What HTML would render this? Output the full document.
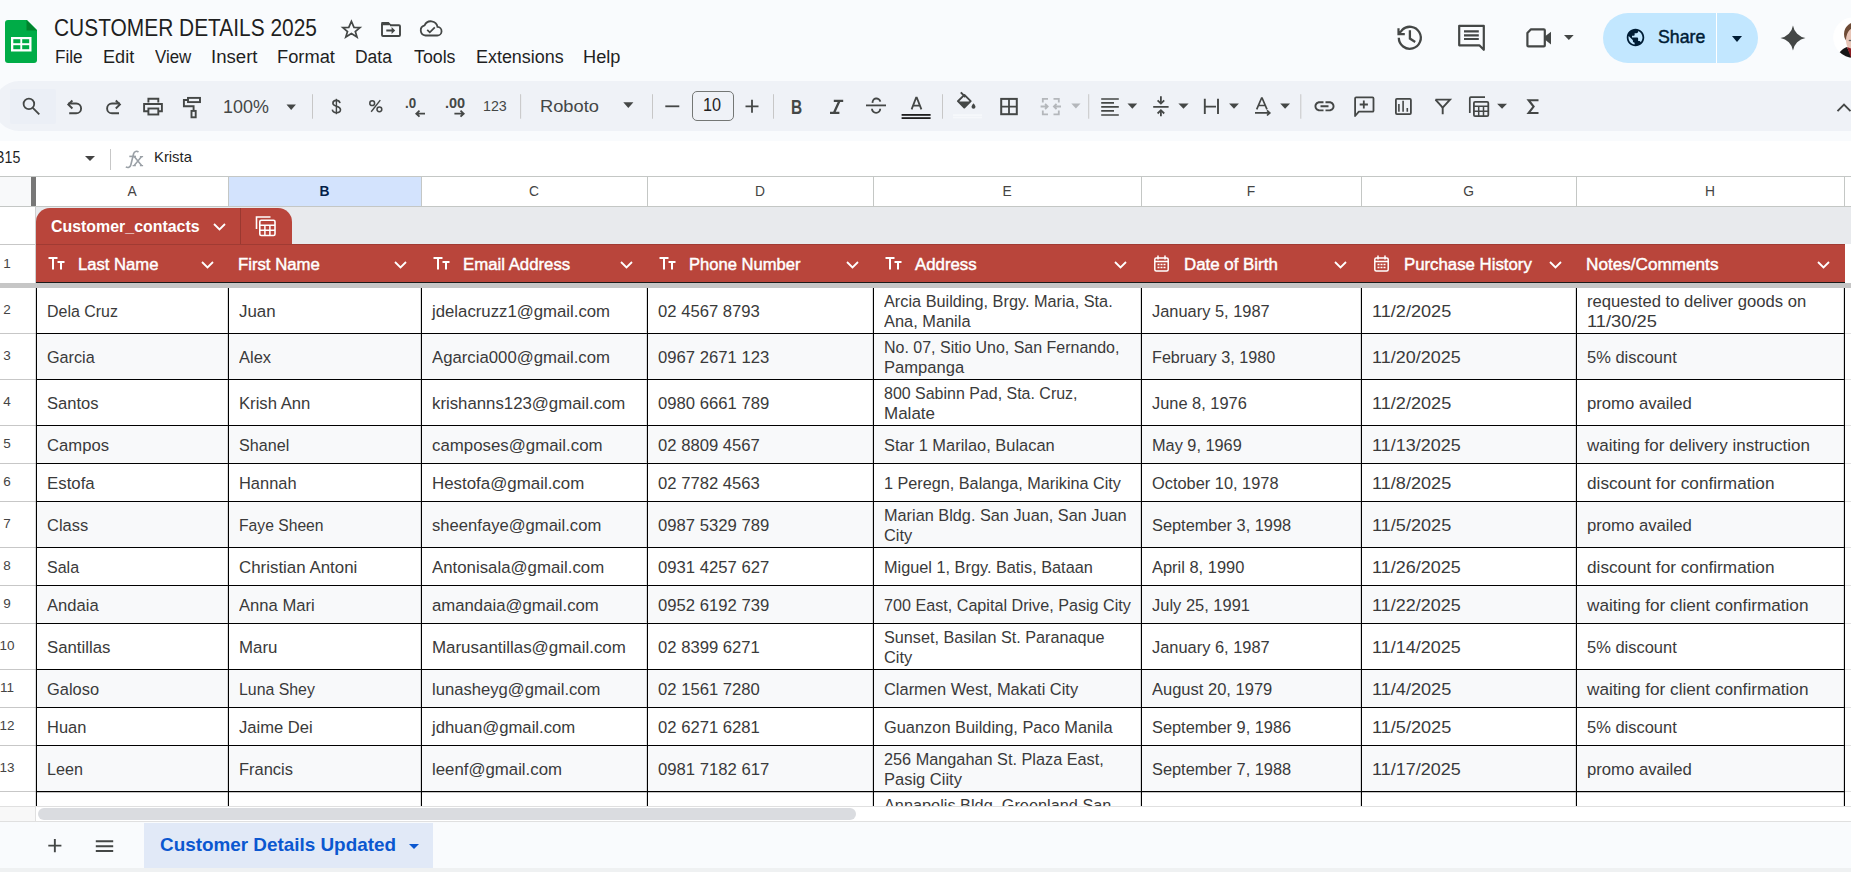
<!DOCTYPE html>
<html><head><meta charset="utf-8"><style>
*{box-sizing:border-box;margin:0;padding:0}
html,body{width:1851px;height:872px;overflow:hidden;background:#f9fbfd;font-family:"Liberation Sans",sans-serif;color:#1f1f1f}
.a{position:absolute}
.t{position:absolute;white-space:pre;line-height:1}
svg{position:absolute;overflow:visible}
.cell{position:absolute;font-size:16px;color:#3a3a3a;white-space:pre;line-height:20px}
.rh{position:absolute;left:-10px;width:34px;font-size:13.5px;color:#444;text-align:center;line-height:1}
.tri{position:absolute;width:0;height:0;border-left:5px solid transparent;border-right:5px solid transparent;border-top:5px solid #444}
.sep{position:absolute;width:1px;background:#c7c7c7}
</style></head><body>

<svg style="left:5px;top:20px" width="32" height="43" viewBox="0 0 32 43">
<path d="M3 0H22L32 10V40a3 3 0 0 1-3 3H3a3 3 0 0 1-3-3V3a3 3 0 0 1 3-3z" fill="#00ac47" />
<path d="M21.5 0L32 10.5H21.5z" fill="#00832d"/>
<rect x="6" y="17" width="20.5" height="14.5" fill="#fff"/>
<rect x="8.3" y="19.2" width="7" height="4" fill="#00ac47"/>
<rect x="17.2" y="19.2" width="7" height="4" fill="#00ac47"/>
<rect x="8.3" y="25.2" width="7" height="4" fill="#00ac47"/>
<rect x="17.2" y="25.2" width="7" height="4" fill="#00ac47"/>
</svg>
<div class="t" style="left:54.11px;top:17.01px;font-size:23.5px;transform:scaleX(0.8896);transform-origin:0 0;color:#1f1f1f">CUSTOMER DETAILS 2025</div>
<div class="t" style="left:54.85px;top:47.86px;font-size:18px;transform:scaleX(0.9538);transform-origin:0 0;color:#1f1f1f">File</div>
<div class="t" style="left:102.59px;top:47.86px;font-size:18px;transform:scaleX(1.0061);transform-origin:0 0;color:#1f1f1f">Edit</div>
<div class="t" style="left:154.50px;top:47.86px;font-size:18px;transform:scaleX(0.9373);transform-origin:0 0;color:#1f1f1f">View</div>
<div class="t" style="left:211.47px;top:47.86px;font-size:18px;transform:scaleX(1.0337);transform-origin:0 0;color:#1f1f1f">Insert</div>
<div class="t" style="left:277.38px;top:47.86px;font-size:18px;transform:scaleX(1.0160);transform-origin:0 0;color:#1f1f1f">Format</div>
<div class="t" style="left:355.43px;top:47.86px;font-size:18px;transform:scaleX(0.9708);transform-origin:0 0;color:#1f1f1f">Data</div>
<div class="t" style="left:414.30px;top:47.86px;font-size:18px;transform:scaleX(0.9876);transform-origin:0 0;color:#1f1f1f">Tools</div>
<div class="t" style="left:475.50px;top:47.86px;font-size:18px;transform:scaleX(0.9960);transform-origin:0 0;color:#1f1f1f">Extensions</div>
<div class="t" style="left:582.59px;top:47.86px;font-size:18px;transform:scaleX(1.0109);transform-origin:0 0;color:#1f1f1f">Help</div>
<div class="a" style="left:1603px;top:13px;width:155px;height:50px;border-radius:25px;background:#c2e7ff"></div>
<div class="a" style="left:1716px;top:13px;width:1px;height:50px;background:#fff"></div>
<svg style="left:1625px;top:27px" width="21" height="21" viewBox="0 0 24 24"><path fill="#001d35" d="M12 2C6.48 2 2 6.48 2 12s4.48 10 10 10 10-4.48 10-10S17.52 2 12 2zm-1 17.93c-3.95-.49-7-3.85-7-7.93 0-.62.08-1.21.21-1.79L9 15v1c0 1.1.9 2 2 2v1.93zm6.9-2.54c-.26-.81-1-1.39-1.9-1.39h-1v-3c0-.55-.45-1-1-1H8v-2h2c.55 0 1-.45 1-1V7h2c1.1 0 2-.9 2-2v-.41c2.93 1.19 5 4.06 5 7.41 0 2.08-.8 3.97-2.1 5.39z"/></svg>
<div class="t" style="left:1657.60px;top:29.22px;font-size:17.7px;transform:scaleX(1.0008);transform-origin:0 0;color:#001d35;-webkit-text-stroke:0.45px #001d35">Share</div>
<div class="tri" style="left:1732px;top:35.5px;border-left-width:5px;border-right-width:5px;border-top:6px solid #001d35"></div>
<svg style="left:1780px;top:25px" width="26" height="26" viewBox="0 0 26 26"><path fill="#444746" transform="translate(0.5,0.5) scale(1.04)" d="M12 24A14.3 14.3 0 0 0 0 12A14.3 14.3 0 0 0 12 0A14.3 14.3 0 0 0 24 12A14.3 14.3 0 0 0 12 24Z"/></svg>
<svg style="left:1833px;top:17px" width="41" height="41" viewBox="0 0 41 41"><defs><clipPath id="av"><circle cx="20.5" cy="20.5" r="20.3"/></clipPath></defs><circle cx="20.5" cy="20.5" r="20.3" fill="#fff"/><g clip-path="url(#av)"><ellipse cx="26" cy="17" rx="15" ry="13" fill="#6e4b36"/><ellipse cx="26.5" cy="23" rx="13.5" ry="15" fill="#e8c5b7"/><path d="M12 13c3-4 9-6 16-5l-4 3c-4 0-8 1-11 4z" fill="#6e4b36"/><ellipse cx="17" cy="23.5" rx="1.4" ry="0.8" fill="#5a5a5a"/><path d="M3 41C5 36 9 32 14 30L19 41Z" fill="#151515"/><path d="M14 30L22 33L26 41H18Z" fill="#8c1c22"/></g></svg>
<div class="a" style="left:-6px;top:81px;width:1900px;height:50px;border-radius:25px;background:#eff2f7"></div>
<div class="a" style="left:10px;top:89px;width:46px;height:35px;border-radius:2px;background:#ebeff6"></div>
<svg style="left:0;top:0" width="1851" height="140" viewBox="0 0 1851 140">
<g fill="none" stroke="#444746" stroke-width="1.9">
<!-- title star -->
<path d="M351.4 21.3L354 27.4L360 27.6L355.3 31.6L357 37L351.4 33.6L345.8 37L347.5 31.6L342.8 27.6L348.8 27.4Z" stroke-width="1.7" stroke-linejoin="miter"/>
<!-- folder -->
<path d="M382 24V35a1 1 0 0 0 1 1H399a1 1 0 0 0 1-1V26.2a1 1 0 0 0-1-1H390" stroke-width="1.9"/>
<!-- cloud -->
<path d="M425.5 35.5h11.5a4.3 4.3 0 0 0 0.5-8.6a6.8 6.8 0 0 0-12.9-1.6a5.2 5.2 0 0 0 0.9 10.2z" stroke-width="1.8"/>
<path d="M427.2 29.8l2.6 2.6l5-5" stroke-width="1.7"/>
<!-- search -->
<circle cx="28.9" cy="103.9" r="5.3" stroke-width="1.8"/>
<path d="M32.8 107.8L39.3 114.3" stroke-width="1.9"/>
<!-- undo -->
<path d="M69.2 113.3H76.2a4.9 4.9 0 0 0 0-9.8H68.3" />
<path d="M72.4 100.5L68.3 104.5L72.4 108.5"/>
<!-- redo -->
<path d="M119 113.3H112a4.9 4.9 0 0 1 0-9.8H119.9" />
<path d="M115.8 100.5L119.9 104.5L115.8 108.5"/>
<!-- print -->
<path d="M148.4 102.6V98.8H158.3V102.6"/>
<path d="M148 111.2H144.1V104H161.9V111.2H158.7"/>
<rect x="148.4" y="108.5" width="9.9" height="6"/>
<!-- paint format -->
<rect x="188" y="97.9" width="12" height="4.2"/>
<path d="M188 100H183.9V106.3H193.6V110.8"/>
<rect x="191.5" y="110.9" width="4.2" height="6.4"/>
<!-- separators -->
</g>
<g fill="#444746">
<path d="M381.1 23.1a1 1 0 0 1 1-1h6.6l3 3.1H381.1z"/>
<path d="M386.3 29.5h5.3v-2.6l3.6 3.6l-3.6 3.6v-2.6h-5.3z"/>
<path d="M286.5 104.4h9.4l-4.7 5.7z"/>
<path d="M623.3 102.3h10.1l-5.05 5.8z"/>
</g>
<g fill="#c7c7c7">
<rect x="312" y="94.2" width="1" height="24.5"/>
<rect x="520.1" y="94.2" width="1" height="24.5"/>
<rect x="652" y="94.2" width="1" height="24.5"/>
<rect x="773" y="94.2" width="1" height="24.5"/>
<rect x="942" y="94.2" width="1" height="24.5"/>
<rect x="1088.2" y="94.2" width="1" height="24.5"/>
<rect x="1300.3" y="94.2" width="1" height="24.5"/>
</g>
<!-- text items -->
<g font-family="Liberation Sans" fill="#444746">
</g>
<g fill="none" stroke="#444746" stroke-width="1.8">
<path d="M425 113.7H416.5M419.5 110.7L416.3 113.7L419.5 116.7"/>
<path d="M454.4 113.7H463.5M460.5 110.7L463.7 113.7L460.5 116.7"/>
<!-- minus / plus -->
<path d="M665.3 106.3H679.3"/>
<path d="M752 99.8V112.8M745.5 106.3H758.5"/>
</g>
<g fill="none" stroke="#444746" stroke-width="1.6">
<path d="M340 103.2C339.6 101.3 338.2 100.4 336.4 100.4C334.3 100.4 332.9 101.6 332.9 103.2C332.9 105 334.8 105.7 336.6 106.2C338.7 106.8 340.5 107.5 340.5 109.7C340.5 111.5 338.8 112.6 336.5 112.6C334.3 112.6 332.6 111.5 332.3 109.6"/>
<path d="M336.4 98.8V114.2" stroke-width="1.4"/>
<circle cx="372.2" cy="103.2" r="2.4" stroke-width="1.5"/>
<circle cx="379.4" cy="109.3" r="2.4" stroke-width="1.5"/>
<path d="M380.3 100.1L371.2 111.8" stroke-width="1.4"/>
</g>
<!-- font size box -->
<rect x="692.5" y="91.5" width="41" height="29" rx="4.5" fill="none" stroke="#747775" stroke-width="1"/>
<!-- Bold -->
<!-- Italic -->
<path d="M833.8 100.9H843.2M830 112.8H839.4M839.4 100.9L834 112.8" fill="none" stroke="#444746" stroke-width="2.3"/>
<!-- Strikethrough -->
<path d="M866 105.4H886" stroke="#444746" stroke-width="1.8"/>
<path d="M872.6 102.8A3.9 3.9 0 0 1 880.3 101.6M872 108.8A3.9 3.9 0 0 0 880.2 108.8" fill="none" stroke="#444746" stroke-width="1.9"/>
<!-- A text color -->
<path d="M911.6 109.4L916.1 97.6h0.7L921.4 109.4M913.2 105.6h6.6" fill="none" stroke="#444746" stroke-width="1.8"/>
<rect x="901.6" y="114" width="29" height="1.8" fill="#1f1f1f"/>
<rect x="901.6" y="117.2" width="29" height="1.8" fill="#1f1f1f"/>
<!-- fill color -->
<path d="M960.8 92.4L965.4 97" stroke="#444746" stroke-width="1.9"/>
<path d="M964.4 94.9L970.7 101.2L964.3 107.6L957.9 101.2Z" fill="none" stroke="#444746" stroke-width="1.9" stroke-linejoin="round"/>
<path d="M958.6 101.4H970L964.3 107Z" fill="#444746"/>
<path d="M973.5 103.2c0 0 -2 2.4 -2 3.6a2 2 0 0 0 4 0c0-1.2-2-3.6-2-3.6z" fill="#444746"/>
<rect x="953" y="114.2" width="29" height="1.8" fill="#f6f8fb"/>
<rect x="953" y="116.6" width="29" height="1.8" fill="#f6f8fb"/>
<!-- borders -->
<rect x="1001.2" y="98.9" width="15.6" height="15.3" fill="none" stroke="#444746" stroke-width="2"/>
<path d="M1009 98.9V114.2M1001.2 106.55H1016.8" stroke="#444746" stroke-width="1.8"/>
<!-- merge (disabled) -->
<g fill="none" stroke="#b4b7bb" stroke-width="1.8">
<path d="M1048 98.9H1042.8V102.6M1048 114.3H1042.8V110.6M1053.5 98.9H1058.8V102.6M1053.5 114.3H1058.8V110.6"/>
<path d="M1040.6 106.5H1047.6M1045.1 103.9L1047.7 106.5L1045.1 109.1M1061 106.5H1054M1056.5 103.9L1053.9 106.5L1056.5 109.1"/>
</g>
<path d="M1071.3 103.6h9.2l-4.6 4.8z" fill="#b4b7bb"/>
<!-- align left -->
<path d="M1101.2 99H1118.8M1101.2 102.9H1114M1101.2 106.9H1118.8M1101.2 110.9H1114M1101.2 115H1118.8" stroke="#444746" stroke-width="1.7"/>
<path d="M1127.5 103.6h9.7l-4.85 5.2z" fill="#444746"/>
<!-- valign -->
<path d="M1153.2 106.9H1168.6M1160.9 96.3V103M1160.9 116.3V110.8" stroke="#444746" stroke-width="1.8" fill="none"/>
<path d="M1157.6 100.3L1160.9 103.6L1164.2 100.3M1157.6 113.5L1160.9 110.2L1164.2 113.5" stroke="#444746" stroke-width="1.8" fill="none"/>
<path d="M1178.4 103.6h10.2l-5.1 5.2z" fill="#444746"/>
<!-- wrap -->
<path d="M1204.8 98.8V114M1218 98.8V114M1204.8 106.6H1216" stroke="#444746" stroke-width="1.9" fill="none"/>
<path d="M1229.1 103.6h9.8l-4.9 5.2z" fill="#444746"/>
<!-- rotate -->
<path d="M1256.7 109.3L1261.6 98h0.5L1267 109.3M1258.5 105.5h6.8" stroke="#444746" stroke-width="1.7" fill="none"/>
<path d="M1255 112.9H1269.5M1267 110.3L1269.8 112.9L1267 115.5" stroke="#444746" stroke-width="1.7" fill="none"/>
<path d="M1280.2 103.6h9.8l-4.9 5.2z" fill="#444746"/>
<!-- link -->
<path transform="translate(1312.5,94.3)" fill="#444746" d="M3.9 12c0-1.71 1.39-3.1 3.1-3.1h4V7H7c-2.76 0-5 2.240-5 5s2.24 5 5 5h4v-1.9H7c-1.71 0-3.1-1.39-3.1-3.1zM8 13h8v-2H8v2zm9-6h-4v1.9h4c1.71 0 3.1 1.39 3.1 3.1s-1.39 3.1-3.1 3.1h-4V17h4c2.76 0 5-2.24 5-5s-2.240-5-5-5z"/>
<!-- comment+ -->
<path d="M1355.1 116V98.4a1 1 0 0 1 1-1H1372.5a1 1 0 0 1 1 1V110.7a1 1 0 0 1-1 1H1358.8z" stroke="#444746" stroke-width="1.8" fill="none" stroke-linejoin="round"/>
<path d="M1363.8 100.4V108.6M1359.7 104.5H1367.9" stroke="#444746" stroke-width="1.8"/>
<!-- chart -->
<rect x="1395.9" y="98.9" width="15" height="15.2" rx="1" fill="none" stroke="#444746" stroke-width="1.8"/>
<path d="M1398.9 104V111.8M1403.1 100.7V111.8M1407.3 108V111.8" stroke="#444746" stroke-width="1.6"/>
<!-- filter -->
<path d="M1435.5 99.6H1450L1442.7 107.6V114.3" stroke="#444746" stroke-width="1.9" fill="none" stroke-linejoin="miter"/>
<path d="M1435.5 99.6L1442.7 107.6" stroke="#444746" stroke-width="1.9"/>
<!-- table -->
<path d="M1469.8 113V98.2a1 1 0 0 1 1-1H1485" stroke="#444746" stroke-width="1.7" fill="none"/>
<rect x="1473.9" y="101.8" width="14.4" height="14.4" rx="1.2" fill="none" stroke="#444746" stroke-width="1.8"/>
<path d="M1473.9 106.3H1488.3M1473.9 111.3H1488.3M1478.7 106.3V116.2M1483.5 106.3V116.2" stroke="#444746" stroke-width="1.5"/>
<path d="M1497.1 103.7h9.9l-4.95 5.1z" fill="#444746"/>
<!-- sigma -->
<path d="M1538.5 100.2H1528.6L1533.6 106.6L1528.6 113H1538.5" stroke="#444746" stroke-width="2.1" fill="none" stroke-linejoin="miter"/>
<!-- caret up -->
<path d="M1837.5 111.2L1844 104.6L1850.5 111.2" stroke="#444746" stroke-width="1.9" fill="none"/>
<!-- topbar right -->
<g fill="none" stroke="#444746" stroke-width="2.3">
<path d="M1402 30A11 11 0 1 1 1398.8 37.8"/><path d="M1398.5 28.2V34.1H1404.8M1398.8 33.8L1402.5 29.8" stroke-width="2.2"/>
<path d="M1409.9 30.3V38.6L1415.2 41.9"/>
</g>

<path d="M1459.2 25.8H1483.8V49.8L1479.3 45.3H1459.2Z" fill="none" stroke="#444746" stroke-width="2.2" stroke-linejoin="round"/>
<path d="M1464 31.4H1478.8M1464 35.3H1478.8M1464 39H1478.8" stroke="#444746" stroke-width="2.2"/>
<path d="M1531 29.3H1543.8a1 1 0 0 1 1 1V45.4a1 1 0 0 1-1 1H1528.4a1 1 0 0 1-1-1V33Z" fill="none" stroke="#444746" stroke-width="2.2" stroke-linejoin="round"/>
<path d="M1544.8 36.5L1551 31.7V44.4L1544.8 39.6Z" fill="#444746"/>
<path d="M1564 35h9.7l-4.85 4.9z" fill="#444746"/>

</svg>
<div class="t" style="left:222.51px;top:97.86px;font-size:18px;transform:scaleX(0.9948);transform-origin:0 0;color:#444746">100%</div>
<div class="t" style="left:483.18px;top:97.86px;font-size:15.4px;transform:scaleX(0.9246);transform-origin:0 0;color:#444746">123</div>
<div class="t" style="left:405.10px;top:96.10px;font-size:14.3px;font-weight:bold;transform:scaleX(0.9355);transform-origin:0 0;color:#444746">.0</div>
<div class="t" style="left:791.21px;top:97.69px;font-size:19.5px;font-weight:bold;transform:scaleX(0.7923);transform-origin:0 0;color:#444746">B</div>
<div class="t" style="left:445.00px;top:96.10px;font-size:14.3px;font-weight:bold;transform:scaleX(1.0139);transform-origin:0 0;color:#444746">.00</div>
<div class="t" style="left:539.82px;top:98.11px;font-size:17px;transform:scaleX(1.0756);transform-origin:0 0;color:#444746">Roboto</div>
<div class="t" style="left:702.87px;top:96.99px;font-size:17.5px;transform:scaleX(0.9289);transform-origin:0 0;color:#1f1f1f">10</div>
<div class="a" style="left:0;top:141px;width:1851px;height:35px;background:#fff"></div>
<div class="t" style="left:-4.86px;top:150.15px;font-size:16.6px;transform:scaleX(0.8588);transform-origin:0 0;color:#1f1f1f">B15</div>
<div class="tri" style="left:85px;top:156px"></div>
<div class="sep" style="left:110px;top:149px;height:21px"></div>
<svg style="left:0;top:0" width="200" height="176" viewBox="0 0 200 176"><g fill="none" stroke="#9aa0a6" stroke-width="1.6"><path d="M138.5 152c-1.6-1.2-4.2-1-4.9 1.8l-2.8 11.2c-0.6 2.4-2.6 3-5 2.1"/><path d="M129.3 156.4H135.8"/><path d="M134.2 156.6L141.6 165.6M141.6 156.6L134.2 165.6" stroke-width="1.5"/><path d="M132.6 156.6h3.2M139.9 156.6h3.2M132.6 165.6h3.2M139.9 165.6h3.2" stroke-width="1.3"/></g></svg>
<div class="t" style="left:153.68px;top:150.43px;font-size:14.5px;transform:scaleX(1.0216);transform-origin:0 0;color:#1f1f1f">Krista</div>
<div class="a" style="left:0;top:176px;width:1851px;height:31px;background:#fff;border-top:1px solid #c4c7c5;border-bottom:1px solid #c4c7c5"></div>
<div class="a" style="left:0;top:177px;width:31px;height:29px;background:#f8f9fa"></div>
<div class="a" style="left:31px;top:177px;width:5px;height:29px;background:#777"></div>
<div class="a" style="left:229px;top:177px;width:192px;height:29px;background:#d3e3fd"></div>
<div class="t" style="left:36px;width:192px;text-align:center;top:185px;font-size:13.8px;color:#444;">A</div>
<div class="t" style="left:228px;width:193px;text-align:center;top:185px;font-size:13.8px;font-weight:bold;color:#041e49;">B</div>
<div class="t" style="left:421px;width:226px;text-align:center;top:185px;font-size:13.8px;color:#444;">C</div>
<div class="t" style="left:647px;width:226px;text-align:center;top:185px;font-size:13.8px;color:#444;">D</div>
<div class="t" style="left:873px;width:268px;text-align:center;top:185px;font-size:13.8px;color:#444;">E</div>
<div class="t" style="left:1141px;width:220px;text-align:center;top:185px;font-size:13.8px;color:#444;">F</div>
<div class="t" style="left:1361px;width:215px;text-align:center;top:185px;font-size:13.8px;color:#444;">G</div>
<div class="t" style="left:1576px;width:268px;text-align:center;top:185px;font-size:13.8px;color:#444;">H</div>
<div class="a" style="left:228px;top:177px;width:1px;height:29px;background:#c4c7c5"></div>
<div class="a" style="left:421px;top:177px;width:1px;height:29px;background:#c4c7c5"></div>
<div class="a" style="left:647px;top:177px;width:1px;height:29px;background:#c4c7c5"></div>
<div class="a" style="left:873px;top:177px;width:1px;height:29px;background:#c4c7c5"></div>
<div class="a" style="left:1141px;top:177px;width:1px;height:29px;background:#c4c7c5"></div>
<div class="a" style="left:1361px;top:177px;width:1px;height:29px;background:#c4c7c5"></div>
<div class="a" style="left:1576px;top:177px;width:1px;height:29px;background:#c4c7c5"></div>
<div class="a" style="left:1844px;top:177px;width:1px;height:29px;background:#c4c7c5"></div>
<div class="a" style="left:0;top:207px;width:1851px;height:599px;background:#fff"></div>
<div class="a" style="left:36px;top:207px;width:1815px;height:37px;background:#e8eaed"></div>
<div class="a" style="left:0;top:244px;width:36px;height:1px;background:#c7c7c7"></div>
<div class="a" style="left:36px;top:208px;width:256px;height:37px;background:#b9453b;border-radius:14px 14px 0 0"></div>
<div class="a" style="left:240px;top:208px;width:1px;height:36px;background:#9a3830"></div>
<div class="t" style="left:50.70px;top:219.38px;font-size:16.8px;font-weight:bold;transform:scaleX(0.9486);transform-origin:0 0;color:#fff">Customer_contacts</div>
<svg style="left:213px;top:223px" width="13" height="8" viewBox="0 0 13 8"><path d="M1 1L6.5 6.5L12 1" fill="none" stroke="#fff" stroke-width="1.8"/></svg>
<svg style="left:255px;top:215px" width="22" height="22" viewBox="0 0 22 22"><path d="M1.5 14V2h14" fill="none" stroke="#fff" stroke-width="1.6"/><rect x="4.8" y="5.3" width="15.2" height="15.2" rx="1.5" fill="none" stroke="#fff" stroke-width="1.6"/><path d="M4.8 10.3h15.2M4.8 15.3h15.2M9.9 10.3v10.2M14.9 10.3v10.2" stroke="#fff" stroke-width="1.5"/></svg>
<div class="a" style="left:36px;top:244px;width:1809px;height:39px;background:#b9453b;border-top:1px solid #a03b33;border-bottom:1px solid #1a1a1a"></div>
<div class="rh" style="top:256.6px">1</div>
<svg style="left:48px;top:257px" width="17" height="13" viewBox="0 0 17 13"><path d="M0.5 1h9M5 1v11.5M9.5 5h7M13 5v7.5" stroke="#fff" stroke-width="2" fill="none"/></svg>
<div class="t" style="left:78px;top:256.86px;font-size:16.7px;transform:scaleX(0.9971);transform-origin:0 0;color:#fff;-webkit-text-stroke:0.45px #fff">Last Name</div>
<svg style="left:201px;top:261px" width="13" height="8" viewBox="0 0 13 8"><path d="M1 1L6.5 6.5L12 1" fill="none" stroke="#fff" stroke-width="1.8"/></svg>
<div class="t" style="left:238px;top:256.86px;font-size:16.7px;transform:scaleX(1.0025);transform-origin:0 0;color:#fff;-webkit-text-stroke:0.45px #fff">First Name</div>
<svg style="left:394px;top:261px" width="13" height="8" viewBox="0 0 13 8"><path d="M1 1L6.5 6.5L12 1" fill="none" stroke="#fff" stroke-width="1.8"/></svg>
<svg style="left:433px;top:257px" width="17" height="13" viewBox="0 0 17 13"><path d="M0.5 1h9M5 1v11.5M9.5 5h7M13 5v7.5" stroke="#fff" stroke-width="2" fill="none"/></svg>
<div class="t" style="left:463px;top:256.86px;font-size:16.7px;transform:scaleX(1.0045);transform-origin:0 0;color:#fff;-webkit-text-stroke:0.45px #fff">Email Address</div>
<svg style="left:620px;top:261px" width="13" height="8" viewBox="0 0 13 8"><path d="M1 1L6.5 6.5L12 1" fill="none" stroke="#fff" stroke-width="1.8"/></svg>
<svg style="left:659px;top:257px" width="17" height="13" viewBox="0 0 17 13"><path d="M0.5 1h9M5 1v11.5M9.5 5h7M13 5v7.5" stroke="#fff" stroke-width="2" fill="none"/></svg>
<div class="t" style="left:689px;top:256.86px;font-size:16.7px;transform:scaleX(0.9928);transform-origin:0 0;color:#fff;-webkit-text-stroke:0.45px #fff">Phone Number</div>
<svg style="left:846px;top:261px" width="13" height="8" viewBox="0 0 13 8"><path d="M1 1L6.5 6.5L12 1" fill="none" stroke="#fff" stroke-width="1.8"/></svg>
<svg style="left:885px;top:257px" width="17" height="13" viewBox="0 0 17 13"><path d="M0.5 1h9M5 1v11.5M9.5 5h7M13 5v7.5" stroke="#fff" stroke-width="2" fill="none"/></svg>
<div class="t" style="left:915px;top:256.86px;font-size:16.7px;transform:scaleX(1.0066);transform-origin:0 0;color:#fff;-webkit-text-stroke:0.45px #fff">Address</div>
<svg style="left:1114px;top:261px" width="13" height="8" viewBox="0 0 13 8"><path d="M1 1L6.5 6.5L12 1" fill="none" stroke="#fff" stroke-width="1.8"/></svg>
<svg style="left:1154px;top:255px" width="15" height="17" viewBox="0 0 15 17"><rect x="0.8" y="3" width="13.4" height="13" rx="1.5" fill="none" stroke="#fff" stroke-width="1.5"/><path d="M0.8 6.5h13.4M4 0.5v4M11 0.5v4" stroke="#fff" stroke-width="1.5"/><path d="M3.5 9.5h2M6.5 9.5h2M9.5 9.5h2M3.5 12.5h2M6.5 12.5h2M9.5 12.5h2" stroke="#fff" stroke-width="1.4"/></svg>
<div class="t" style="left:1184px;top:256.86px;font-size:16.7px;transform:scaleX(1.0111);transform-origin:0 0;color:#fff;-webkit-text-stroke:0.45px #fff">Date of Birth</div>
<svg style="left:1334px;top:261px" width="13" height="8" viewBox="0 0 13 8"><path d="M1 1L6.5 6.5L12 1" fill="none" stroke="#fff" stroke-width="1.8"/></svg>
<svg style="left:1374px;top:255px" width="15" height="17" viewBox="0 0 15 17"><rect x="0.8" y="3" width="13.4" height="13" rx="1.5" fill="none" stroke="#fff" stroke-width="1.5"/><path d="M0.8 6.5h13.4M4 0.5v4M11 0.5v4" stroke="#fff" stroke-width="1.5"/><path d="M3.5 9.5h2M6.5 9.5h2M9.5 9.5h2M3.5 12.5h2M6.5 12.5h2M9.5 12.5h2" stroke="#fff" stroke-width="1.4"/></svg>
<div class="t" style="left:1404px;top:256.86px;font-size:16.7px;transform:scaleX(1.0060);transform-origin:0 0;color:#fff;-webkit-text-stroke:0.45px #fff">Purchase History</div>
<svg style="left:1549px;top:261px" width="13" height="8" viewBox="0 0 13 8"><path d="M1 1L6.5 6.5L12 1" fill="none" stroke="#fff" stroke-width="1.8"/></svg>
<div class="t" style="left:1586px;top:256.86px;font-size:16.7px;transform:scaleX(1.0276);transform-origin:0 0;color:#fff;-webkit-text-stroke:0.45px #fff">Notes/Comments</div>
<svg style="left:1817px;top:261px" width="13" height="8" viewBox="0 0 13 8"><path d="M1 1L6.5 6.5L12 1" fill="none" stroke="#fff" stroke-width="1.8"/></svg>
<div class="a" style="left:0;top:283px;width:1851px;height:5px;background:#c6c6c6"></div>
<div class="a" style="left:37px;top:288px;width:1807px;height:45px;background:#fff"></div>
<div class="rh" style="top:302.6px">2</div>
<div class="a" style="left:0;top:333px;width:36px;height:1px;background:#c7c7c7"></div>
<div class="a" style="left:1845px;top:333px;width:6px;height:1px;background:#e1e1e1"></div>
<div class="t" style="left:46.5px;top:303.86px;font-size:16.7px;transform:scaleX(0.9560);transform-origin:0 0;color:#3a3a3a">Dela Cruz</div>
<div class="t" style="left:238.5px;top:303.86px;font-size:16.7px;transform:scaleX(1.0125);transform-origin:0 0;color:#3a3a3a">Juan</div>
<div class="t" style="left:431.5px;top:303.86px;font-size:16.7px;transform:scaleX(1.0037);transform-origin:0 0;color:#3a3a3a">jdelacruzz1@gmail.com</div>
<div class="t" style="left:657.5px;top:303.86px;font-size:16.7px;transform:scaleX(0.9979);transform-origin:0 0;color:#3a3a3a">02 4567 8793</div>
<div class="t" style="left:883.5px;top:293.86px;font-size:16.7px;transform:scaleX(0.9759);transform-origin:0 0;color:#3a3a3a">Arcia Building, Brgy. Maria, Sta.</div>
<div class="t" style="left:883.5px;top:313.86px;font-size:16.7px;transform:scaleX(0.9816);transform-origin:0 0;color:#3a3a3a">Ana, Manila</div>
<div class="t" style="left:1151.5px;top:303.86px;font-size:16.7px;transform:scaleX(0.9836);transform-origin:0 0;color:#3a3a3a">January 5, 1987</div>
<div class="t" style="left:1371.5px;top:303.86px;font-size:16.7px;transform:scaleX(1.0860);transform-origin:0 0;color:#3a3a3a">11/2/2025</div>
<div class="t" style="left:1586.5px;top:293.86px;font-size:16.7px;transform:scaleX(0.9969);transform-origin:0 0;color:#3a3a3a">requested to deliver goods on</div>
<div class="t" style="left:1586.5px;top:313.86px;font-size:16.7px;transform:scaleX(1.0974);transform-origin:0 0;color:#3a3a3a">11/30/25</div>
<div class="a" style="left:36px;top:333px;width:1809px;height:1px;background:#000"></div>
<div class="a" style="left:36px;top:334px;width:1809px;height:1px;background:#555;opacity:.35"></div>
<div class="a" style="left:37px;top:334px;width:1807px;height:45px;background:#f8f9fa"></div>
<div class="rh" style="top:348.6px">3</div>
<div class="a" style="left:0;top:379px;width:36px;height:1px;background:#c7c7c7"></div>
<div class="a" style="left:1845px;top:379px;width:6px;height:1px;background:#e1e1e1"></div>
<div class="t" style="left:46.5px;top:349.86px;font-size:16.7px;transform:scaleX(0.9711);transform-origin:0 0;color:#3a3a3a">Garcia</div>
<div class="t" style="left:238.5px;top:349.86px;font-size:16.7px;transform:scaleX(0.9860);transform-origin:0 0;color:#3a3a3a">Alex</div>
<div class="t" style="left:431.5px;top:349.86px;font-size:16.7px;transform:scaleX(1.0033);transform-origin:0 0;color:#3a3a3a">Agarcia000@gmail.com</div>
<div class="t" style="left:657.5px;top:349.86px;font-size:16.7px;transform:scaleX(0.9987);transform-origin:0 0;color:#3a3a3a">0967 2671 123</div>
<div class="t" style="left:883.5px;top:339.86px;font-size:16.7px;transform:scaleX(0.9577);transform-origin:0 0;color:#3a3a3a">No. 07, Sitio Uno, San Fernando,</div>
<div class="t" style="left:883.5px;top:359.86px;font-size:16.7px;transform:scaleX(0.9925);transform-origin:0 0;color:#3a3a3a">Pampanga</div>
<div class="t" style="left:1151.5px;top:349.86px;font-size:16.7px;transform:scaleX(0.9688);transform-origin:0 0;color:#3a3a3a">February 3, 1980</div>
<div class="t" style="left:1371.5px;top:349.86px;font-size:16.7px;transform:scaleX(1.0773);transform-origin:0 0;color:#3a3a3a">11/20/2025</div>
<div class="t" style="left:1586.5px;top:349.86px;font-size:16.7px;transform:scaleX(0.9875);transform-origin:0 0;color:#3a3a3a">5% discount</div>
<div class="a" style="left:36px;top:379px;width:1809px;height:1px;background:#000"></div>
<div class="a" style="left:36px;top:380px;width:1809px;height:1px;background:#555;opacity:.35"></div>
<div class="a" style="left:37px;top:380px;width:1807px;height:45px;background:#fff"></div>
<div class="rh" style="top:394.6px">4</div>
<div class="a" style="left:0;top:425px;width:36px;height:1px;background:#c7c7c7"></div>
<div class="a" style="left:1845px;top:425px;width:6px;height:1px;background:#e1e1e1"></div>
<div class="t" style="left:46.5px;top:395.86px;font-size:16.7px;transform:scaleX(0.9919);transform-origin:0 0;color:#3a3a3a">Santos</div>
<div class="t" style="left:238.5px;top:395.86px;font-size:16.7px;transform:scaleX(0.9983);transform-origin:0 0;color:#3a3a3a">Krish Ann</div>
<div class="t" style="left:431.5px;top:395.86px;font-size:16.7px;transform:scaleX(1.0057);transform-origin:0 0;color:#3a3a3a">krishanns123@gmail.com</div>
<div class="t" style="left:657.5px;top:395.86px;font-size:16.7px;transform:scaleX(0.9987);transform-origin:0 0;color:#3a3a3a">0980 6661 789</div>
<div class="t" style="left:883.5px;top:385.86px;font-size:16.7px;transform:scaleX(0.9569);transform-origin:0 0;color:#3a3a3a">800 Sabinn Pad, Sta. Cruz,</div>
<div class="t" style="left:883.5px;top:405.86px;font-size:16.7px;transform:scaleX(1.0181);transform-origin:0 0;color:#3a3a3a">Malate</div>
<div class="t" style="left:1151.5px;top:395.86px;font-size:16.7px;transform:scaleX(0.9819);transform-origin:0 0;color:#3a3a3a">June 8, 1976</div>
<div class="t" style="left:1371.5px;top:395.86px;font-size:16.7px;transform:scaleX(1.0860);transform-origin:0 0;color:#3a3a3a">11/2/2025</div>
<div class="t" style="left:1586.5px;top:395.86px;font-size:16.7px;transform:scaleX(1.0001);transform-origin:0 0;color:#3a3a3a">promo availed</div>
<div class="a" style="left:36px;top:425px;width:1809px;height:1px;background:#000"></div>
<div class="a" style="left:36px;top:426px;width:1809px;height:1px;background:#555;opacity:.35"></div>
<div class="a" style="left:37px;top:426px;width:1807px;height:37px;background:#f8f9fa"></div>
<div class="rh" style="top:436.6px">5</div>
<div class="a" style="left:0;top:463px;width:36px;height:1px;background:#c7c7c7"></div>
<div class="a" style="left:1845px;top:463px;width:6px;height:1px;background:#e1e1e1"></div>
<div class="t" style="left:46.5px;top:437.86px;font-size:16.7px;transform:scaleX(0.9972);transform-origin:0 0;color:#3a3a3a">Campos</div>
<div class="t" style="left:238.5px;top:437.86px;font-size:16.7px;transform:scaleX(0.9663);transform-origin:0 0;color:#3a3a3a">Shanel</div>
<div class="t" style="left:431.5px;top:437.86px;font-size:16.7px;transform:scaleX(1.0090);transform-origin:0 0;color:#3a3a3a">camposes@gmail.com</div>
<div class="t" style="left:657.5px;top:437.86px;font-size:16.7px;transform:scaleX(0.9979);transform-origin:0 0;color:#3a3a3a">02 8809 4567</div>
<div class="t" style="left:883.5px;top:437.86px;font-size:16.7px;transform:scaleX(0.9838);transform-origin:0 0;color:#3a3a3a">Star 1 Marilao, Bulacan</div>
<div class="t" style="left:1151.5px;top:437.86px;font-size:16.7px;transform:scaleX(0.9769);transform-origin:0 0;color:#3a3a3a">May 9, 1969</div>
<div class="t" style="left:1371.5px;top:437.86px;font-size:16.7px;transform:scaleX(1.0773);transform-origin:0 0;color:#3a3a3a">11/13/2025</div>
<div class="t" style="left:1586.5px;top:437.86px;font-size:16.7px;transform:scaleX(1.0181);transform-origin:0 0;color:#3a3a3a">waiting for delivery instruction</div>
<div class="a" style="left:36px;top:463px;width:1809px;height:1px;background:#000"></div>
<div class="a" style="left:36px;top:464px;width:1809px;height:1px;background:#555;opacity:.35"></div>
<div class="a" style="left:37px;top:464px;width:1807px;height:37px;background:#fff"></div>
<div class="rh" style="top:474.6px">6</div>
<div class="a" style="left:0;top:501px;width:36px;height:1px;background:#c7c7c7"></div>
<div class="a" style="left:1845px;top:501px;width:6px;height:1px;background:#e1e1e1"></div>
<div class="t" style="left:46.5px;top:475.86px;font-size:16.7px;transform:scaleX(1.0083);transform-origin:0 0;color:#3a3a3a">Estofa</div>
<div class="t" style="left:238.5px;top:475.86px;font-size:16.7px;transform:scaleX(0.9848);transform-origin:0 0;color:#3a3a3a">Hannah</div>
<div class="t" style="left:431.5px;top:475.86px;font-size:16.7px;transform:scaleX(1.0116);transform-origin:0 0;color:#3a3a3a">Hestofa@gmail.com</div>
<div class="t" style="left:657.5px;top:475.86px;font-size:16.7px;transform:scaleX(0.9979);transform-origin:0 0;color:#3a3a3a">02 7782 4563</div>
<div class="t" style="left:883.5px;top:475.86px;font-size:16.7px;transform:scaleX(0.9714);transform-origin:0 0;color:#3a3a3a">1 Peregn, Balanga, Marikina City</div>
<div class="t" style="left:1151.5px;top:475.86px;font-size:16.7px;transform:scaleX(0.9809);transform-origin:0 0;color:#3a3a3a">October 10, 1978</div>
<div class="t" style="left:1371.5px;top:475.86px;font-size:16.7px;transform:scaleX(1.0860);transform-origin:0 0;color:#3a3a3a">11/8/2025</div>
<div class="t" style="left:1586.5px;top:475.86px;font-size:16.7px;transform:scaleX(1.0311);transform-origin:0 0;color:#3a3a3a">discount for confirmation</div>
<div class="a" style="left:36px;top:501px;width:1809px;height:1px;background:#000"></div>
<div class="a" style="left:36px;top:502px;width:1809px;height:1px;background:#555;opacity:.35"></div>
<div class="a" style="left:37px;top:502px;width:1807px;height:45px;background:#f8f9fa"></div>
<div class="rh" style="top:516.6px">7</div>
<div class="a" style="left:0;top:547px;width:36px;height:1px;background:#c7c7c7"></div>
<div class="a" style="left:1845px;top:547px;width:6px;height:1px;background:#e1e1e1"></div>
<div class="t" style="left:46.5px;top:517.86px;font-size:16.7px;transform:scaleX(0.9861);transform-origin:0 0;color:#3a3a3a">Class</div>
<div class="t" style="left:238.5px;top:517.86px;font-size:16.7px;transform:scaleX(0.9394);transform-origin:0 0;color:#3a3a3a">Faye Sheen</div>
<div class="t" style="left:431.5px;top:517.86px;font-size:16.7px;transform:scaleX(0.9957);transform-origin:0 0;color:#3a3a3a">sheenfaye@gmail.com</div>
<div class="t" style="left:657.5px;top:517.86px;font-size:16.7px;transform:scaleX(0.9987);transform-origin:0 0;color:#3a3a3a">0987 5329 789</div>
<div class="t" style="left:883.5px;top:507.86px;font-size:16.7px;transform:scaleX(0.9759);transform-origin:0 0;color:#3a3a3a">Marian Bldg. San Juan, San Juan</div>
<div class="t" style="left:883.5px;top:527.86px;font-size:16.7px;transform:scaleX(0.9821);transform-origin:0 0;color:#3a3a3a">City</div>
<div class="t" style="left:1151.5px;top:517.86px;font-size:16.7px;transform:scaleX(0.9802);transform-origin:0 0;color:#3a3a3a">September 3, 1998</div>
<div class="t" style="left:1371.5px;top:517.86px;font-size:16.7px;transform:scaleX(1.0860);transform-origin:0 0;color:#3a3a3a">11/5/2025</div>
<div class="t" style="left:1586.5px;top:517.86px;font-size:16.7px;transform:scaleX(1.0001);transform-origin:0 0;color:#3a3a3a">promo availed</div>
<div class="a" style="left:36px;top:547px;width:1809px;height:1px;background:#000"></div>
<div class="a" style="left:36px;top:548px;width:1809px;height:1px;background:#555;opacity:.35"></div>
<div class="a" style="left:37px;top:548px;width:1807px;height:37px;background:#fff"></div>
<div class="rh" style="top:558.6px">8</div>
<div class="a" style="left:0;top:585px;width:36px;height:1px;background:#c7c7c7"></div>
<div class="a" style="left:1845px;top:585px;width:6px;height:1px;background:#e1e1e1"></div>
<div class="t" style="left:46.5px;top:559.86px;font-size:16.7px;transform:scaleX(0.9598);transform-origin:0 0;color:#3a3a3a">Sala</div>
<div class="t" style="left:238.5px;top:559.86px;font-size:16.7px;transform:scaleX(1.0120);transform-origin:0 0;color:#3a3a3a">Christian Antoni</div>
<div class="t" style="left:431.5px;top:559.86px;font-size:16.7px;transform:scaleX(1.0073);transform-origin:0 0;color:#3a3a3a">Antonisala@gmail.com</div>
<div class="t" style="left:657.5px;top:559.86px;font-size:16.7px;transform:scaleX(0.9987);transform-origin:0 0;color:#3a3a3a">0931 4257 627</div>
<div class="t" style="left:883.5px;top:559.86px;font-size:16.7px;transform:scaleX(0.9759);transform-origin:0 0;color:#3a3a3a">Miguel 1, Brgy. Batis, Bataan</div>
<div class="t" style="left:1151.5px;top:559.86px;font-size:16.7px;transform:scaleX(0.9852);transform-origin:0 0;color:#3a3a3a">April 8, 1990</div>
<div class="t" style="left:1371.5px;top:559.86px;font-size:16.7px;transform:scaleX(1.0773);transform-origin:0 0;color:#3a3a3a">11/26/2025</div>
<div class="t" style="left:1586.5px;top:559.86px;font-size:16.7px;transform:scaleX(1.0311);transform-origin:0 0;color:#3a3a3a">discount for confirmation</div>
<div class="a" style="left:36px;top:585px;width:1809px;height:1px;background:#000"></div>
<div class="a" style="left:36px;top:586px;width:1809px;height:1px;background:#555;opacity:.35"></div>
<div class="a" style="left:37px;top:586px;width:1807px;height:37px;background:#f8f9fa"></div>
<div class="rh" style="top:596.6px">9</div>
<div class="a" style="left:0;top:623px;width:36px;height:1px;background:#c7c7c7"></div>
<div class="a" style="left:1845px;top:623px;width:6px;height:1px;background:#e1e1e1"></div>
<div class="t" style="left:46.5px;top:597.86px;font-size:16.7px;transform:scaleX(0.9937);transform-origin:0 0;color:#3a3a3a">Andaia</div>
<div class="t" style="left:238.5px;top:597.86px;font-size:16.7px;transform:scaleX(0.9961);transform-origin:0 0;color:#3a3a3a">Anna Mari</div>
<div class="t" style="left:431.5px;top:597.86px;font-size:16.7px;transform:scaleX(1.0031);transform-origin:0 0;color:#3a3a3a">amandaia@gmail.com</div>
<div class="t" style="left:657.5px;top:597.86px;font-size:16.7px;transform:scaleX(0.9987);transform-origin:0 0;color:#3a3a3a">0952 6192 739</div>
<div class="t" style="left:883.5px;top:597.86px;font-size:16.7px;transform:scaleX(0.9678);transform-origin:0 0;color:#3a3a3a">700 East, Capital Drive, Pasig City</div>
<div class="t" style="left:1151.5px;top:597.86px;font-size:16.7px;transform:scaleX(0.9873);transform-origin:0 0;color:#3a3a3a">July 25, 1991</div>
<div class="t" style="left:1371.5px;top:597.86px;font-size:16.7px;transform:scaleX(1.0773);transform-origin:0 0;color:#3a3a3a">11/22/2025</div>
<div class="t" style="left:1586.5px;top:597.86px;font-size:16.7px;transform:scaleX(1.0292);transform-origin:0 0;color:#3a3a3a">waiting for client confirmation</div>
<div class="a" style="left:36px;top:623px;width:1809px;height:1px;background:#000"></div>
<div class="a" style="left:36px;top:624px;width:1809px;height:1px;background:#555;opacity:.35"></div>
<div class="a" style="left:37px;top:624px;width:1807px;height:45px;background:#fff"></div>
<div class="rh" style="top:638.6px">10</div>
<div class="a" style="left:0;top:669px;width:36px;height:1px;background:#c7c7c7"></div>
<div class="a" style="left:1845px;top:669px;width:6px;height:1px;background:#e1e1e1"></div>
<div class="t" style="left:46.5px;top:639.86px;font-size:16.7px;transform:scaleX(1.0052);transform-origin:0 0;color:#3a3a3a">Santillas</div>
<div class="t" style="left:238.5px;top:639.86px;font-size:16.7px;transform:scaleX(1.0107);transform-origin:0 0;color:#3a3a3a">Maru</div>
<div class="t" style="left:431.5px;top:639.86px;font-size:16.7px;transform:scaleX(1.0133);transform-origin:0 0;color:#3a3a3a">Marusantillas@gmail.com</div>
<div class="t" style="left:657.5px;top:639.86px;font-size:16.7px;transform:scaleX(0.9979);transform-origin:0 0;color:#3a3a3a">02 8399 6271</div>
<div class="t" style="left:883.5px;top:629.86px;font-size:16.7px;transform:scaleX(0.9703);transform-origin:0 0;color:#3a3a3a">Sunset, Basilan St. Paranaque</div>
<div class="t" style="left:883.5px;top:649.86px;font-size:16.7px;transform:scaleX(0.9821);transform-origin:0 0;color:#3a3a3a">City</div>
<div class="t" style="left:1151.5px;top:639.86px;font-size:16.7px;transform:scaleX(0.9836);transform-origin:0 0;color:#3a3a3a">January 6, 1987</div>
<div class="t" style="left:1371.5px;top:639.86px;font-size:16.7px;transform:scaleX(1.0773);transform-origin:0 0;color:#3a3a3a">11/14/2025</div>
<div class="t" style="left:1586.5px;top:639.86px;font-size:16.7px;transform:scaleX(0.9875);transform-origin:0 0;color:#3a3a3a">5% discount</div>
<div class="a" style="left:36px;top:669px;width:1809px;height:1px;background:#000"></div>
<div class="a" style="left:36px;top:670px;width:1809px;height:1px;background:#555;opacity:.35"></div>
<div class="a" style="left:37px;top:670px;width:1807px;height:37px;background:#f8f9fa"></div>
<div class="rh" style="top:680.6px">11</div>
<div class="a" style="left:0;top:707px;width:36px;height:1px;background:#c7c7c7"></div>
<div class="a" style="left:1845px;top:707px;width:6px;height:1px;background:#e1e1e1"></div>
<div class="t" style="left:46.5px;top:681.86px;font-size:16.7px;transform:scaleX(0.9846);transform-origin:0 0;color:#3a3a3a">Galoso</div>
<div class="t" style="left:238.5px;top:681.86px;font-size:16.7px;transform:scaleX(0.9507);transform-origin:0 0;color:#3a3a3a">Luna Shey</div>
<div class="t" style="left:431.5px;top:681.86px;font-size:16.7px;transform:scaleX(0.9962);transform-origin:0 0;color:#3a3a3a">lunasheyg@gmail.com</div>
<div class="t" style="left:657.5px;top:681.86px;font-size:16.7px;transform:scaleX(0.9979);transform-origin:0 0;color:#3a3a3a">02 1561 7280</div>
<div class="t" style="left:883.5px;top:681.86px;font-size:16.7px;transform:scaleX(0.9845);transform-origin:0 0;color:#3a3a3a">Clarmen West, Makati City</div>
<div class="t" style="left:1151.5px;top:681.86px;font-size:16.7px;transform:scaleX(0.9893);transform-origin:0 0;color:#3a3a3a">August 20, 1979</div>
<div class="t" style="left:1371.5px;top:681.86px;font-size:16.7px;transform:scaleX(1.0860);transform-origin:0 0;color:#3a3a3a">11/4/2025</div>
<div class="t" style="left:1586.5px;top:681.86px;font-size:16.7px;transform:scaleX(1.0292);transform-origin:0 0;color:#3a3a3a">waiting for client confirmation</div>
<div class="a" style="left:36px;top:707px;width:1809px;height:1px;background:#000"></div>
<div class="a" style="left:36px;top:708px;width:1809px;height:1px;background:#555;opacity:.35"></div>
<div class="a" style="left:37px;top:708px;width:1807px;height:37px;background:#fff"></div>
<div class="rh" style="top:718.6px">12</div>
<div class="a" style="left:0;top:745px;width:36px;height:1px;background:#c7c7c7"></div>
<div class="a" style="left:1845px;top:745px;width:6px;height:1px;background:#e1e1e1"></div>
<div class="t" style="left:46.5px;top:719.86px;font-size:16.7px;transform:scaleX(0.9855);transform-origin:0 0;color:#3a3a3a">Huan</div>
<div class="t" style="left:238.5px;top:719.86px;font-size:16.7px;transform:scaleX(0.9931);transform-origin:0 0;color:#3a3a3a">Jaime Dei</div>
<div class="t" style="left:431.5px;top:719.86px;font-size:16.7px;transform:scaleX(1.0014);transform-origin:0 0;color:#3a3a3a">jdhuan@gmail.com</div>
<div class="t" style="left:657.5px;top:719.86px;font-size:16.7px;transform:scaleX(0.9979);transform-origin:0 0;color:#3a3a3a">02 6271 6281</div>
<div class="t" style="left:883.5px;top:719.86px;font-size:16.7px;transform:scaleX(0.9818);transform-origin:0 0;color:#3a3a3a">Guanzon Building, Paco Manila</div>
<div class="t" style="left:1151.5px;top:719.86px;font-size:16.7px;transform:scaleX(0.9802);transform-origin:0 0;color:#3a3a3a">September 9, 1986</div>
<div class="t" style="left:1371.5px;top:719.86px;font-size:16.7px;transform:scaleX(1.0860);transform-origin:0 0;color:#3a3a3a">11/5/2025</div>
<div class="t" style="left:1586.5px;top:719.86px;font-size:16.7px;transform:scaleX(0.9875);transform-origin:0 0;color:#3a3a3a">5% discount</div>
<div class="a" style="left:36px;top:745px;width:1809px;height:1px;background:#000"></div>
<div class="a" style="left:36px;top:746px;width:1809px;height:1px;background:#555;opacity:.35"></div>
<div class="a" style="left:37px;top:746px;width:1807px;height:45px;background:#f8f9fa"></div>
<div class="rh" style="top:760.6px">13</div>
<div class="a" style="left:0;top:791px;width:36px;height:1px;background:#c7c7c7"></div>
<div class="a" style="left:1845px;top:791px;width:6px;height:1px;background:#e1e1e1"></div>
<div class="t" style="left:46.5px;top:761.86px;font-size:16.7px;transform:scaleX(0.9655);transform-origin:0 0;color:#3a3a3a">Leen</div>
<div class="t" style="left:238.5px;top:761.86px;font-size:16.7px;transform:scaleX(0.9857);transform-origin:0 0;color:#3a3a3a">Francis</div>
<div class="t" style="left:431.5px;top:761.86px;font-size:16.7px;transform:scaleX(1.0064);transform-origin:0 0;color:#3a3a3a">leenf@gmail.com</div>
<div class="t" style="left:657.5px;top:761.86px;font-size:16.7px;transform:scaleX(0.9987);transform-origin:0 0;color:#3a3a3a">0981 7182 617</div>
<div class="t" style="left:883.5px;top:751.86px;font-size:16.7px;transform:scaleX(0.9749);transform-origin:0 0;color:#3a3a3a">256 Mangahan St. Plaza East,</div>
<div class="t" style="left:883.5px;top:771.86px;font-size:16.7px;transform:scaleX(0.9881);transform-origin:0 0;color:#3a3a3a">Pasig Ciity</div>
<div class="t" style="left:1151.5px;top:761.86px;font-size:16.7px;transform:scaleX(0.9802);transform-origin:0 0;color:#3a3a3a">September 7, 1988</div>
<div class="t" style="left:1371.5px;top:761.86px;font-size:16.7px;transform:scaleX(1.0773);transform-origin:0 0;color:#3a3a3a">11/17/2025</div>
<div class="t" style="left:1586.5px;top:761.86px;font-size:16.7px;transform:scaleX(1.0001);transform-origin:0 0;color:#3a3a3a">promo availed</div>
<div class="a" style="left:36px;top:791px;width:1809px;height:1px;background:#000"></div>
<div class="a" style="left:36px;top:792px;width:1809px;height:1px;background:#555;opacity:.35"></div>
<div class="a" style="left:37px;top:792px;width:1807px;height:14px;overflow:hidden"><div class="t" style="left:846.5px;top:6.36px;font-size:16.7px;transform:scaleX(0.9765);transform-origin:0 0;color:#3a3a3a">Annapolis Bldg. Greenland San</div></div>
<div class="a" style="left:36px;top:288px;width:1px;height:518px;background:#000"></div>
<div class="a" style="left:35px;top:288px;width:1px;height:518px;background:#555;opacity:.2"></div>
<div class="a" style="left:228px;top:288px;width:1px;height:518px;background:#000"></div>
<div class="a" style="left:227px;top:288px;width:1px;height:518px;background:#555;opacity:.2"></div>
<div class="a" style="left:421px;top:288px;width:1px;height:518px;background:#000"></div>
<div class="a" style="left:420px;top:288px;width:1px;height:518px;background:#555;opacity:.2"></div>
<div class="a" style="left:647px;top:288px;width:1px;height:518px;background:#000"></div>
<div class="a" style="left:646px;top:288px;width:1px;height:518px;background:#555;opacity:.2"></div>
<div class="a" style="left:873px;top:288px;width:1px;height:518px;background:#000"></div>
<div class="a" style="left:872px;top:288px;width:1px;height:518px;background:#555;opacity:.2"></div>
<div class="a" style="left:1141px;top:288px;width:1px;height:518px;background:#000"></div>
<div class="a" style="left:1140px;top:288px;width:1px;height:518px;background:#555;opacity:.2"></div>
<div class="a" style="left:1361px;top:288px;width:1px;height:518px;background:#000"></div>
<div class="a" style="left:1360px;top:288px;width:1px;height:518px;background:#555;opacity:.2"></div>
<div class="a" style="left:1576px;top:288px;width:1px;height:518px;background:#000"></div>
<div class="a" style="left:1575px;top:288px;width:1px;height:518px;background:#555;opacity:.2"></div>
<div class="a" style="left:1844px;top:288px;width:1px;height:518px;background:#000"></div>
<div class="a" style="left:1843px;top:288px;width:1px;height:518px;background:#555;opacity:.2"></div>
<div class="a" style="left:0;top:806px;width:1851px;height:16px;background:#fff;border-top:1px solid #e0e0e0;border-bottom:1px solid #e0e0e0"></div>
<div class="a" style="left:0;top:807px;width:35px;height:14px;background:#f8f8f8"></div>
<div class="a" style="left:35px;top:207px;width:1px;height:76px;background:#d0d0d0"></div>
<div class="a" style="left:35px;top:806px;width:1px;height:16px;background:#e0e0e0"></div>
<div class="a" style="left:38px;top:808px;width:818px;height:12px;border-radius:6px;background:#dadce0"></div>
<div class="a" style="left:0;top:822px;width:1851px;height:46px;background:#f9fbfd"></div>
<div class="a" style="left:0;top:868px;width:1851px;height:4px;background:#eff1f2"></div>
<div class="a" style="left:144px;top:823px;width:289px;height:45px;background:#e1e9f7"></div>
<div class="t" style="left:159.80px;top:836.49px;font-size:18.2px;font-weight:bold;transform:scaleX(1.0377);transform-origin:0 0;color:#0b57d0">Customer Details Updated</div>
<div class="tri" style="left:409px;top:844px;border-top-color:#0b57d0"></div>
<svg style="left:0;top:0" width="1" height="1"><path d="M54.85 839V852.2M48.3 845.6H61.4" stroke="#444746" stroke-width="1.9"/><path d="M95.8 841.3H113.2M95.8 846.2H113.2M95.8 851H113.2" stroke="#444746" stroke-width="1.9"/></svg>
</body></html>
